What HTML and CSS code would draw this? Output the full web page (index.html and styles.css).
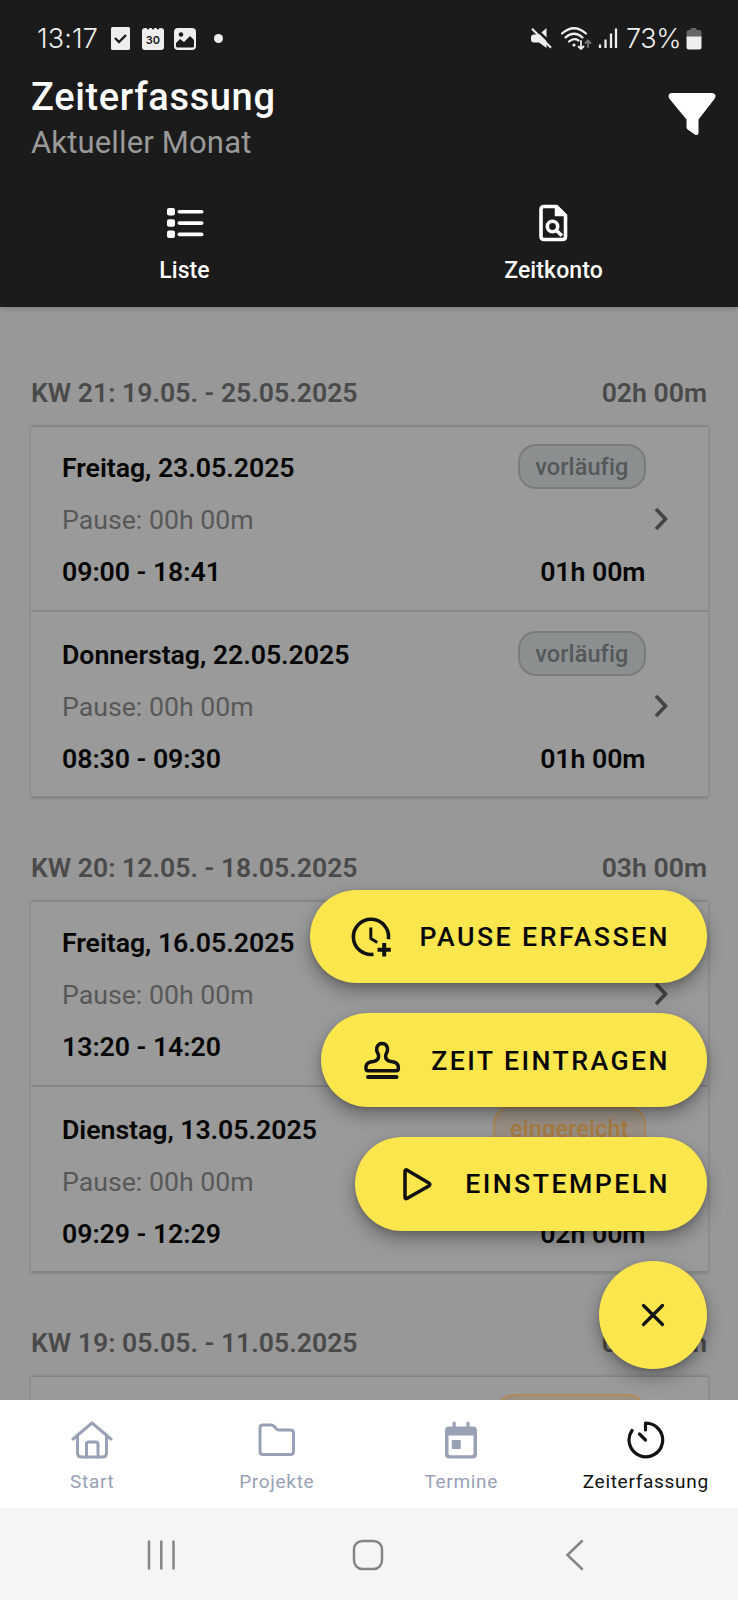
FILE: index.html
```html
<!DOCTYPE html>
<html lang="de">
<head>
    <meta charset="UTF-8">
    <meta name="viewport" content="width=device-width, initial-scale=1.0">
    <title>Zeiterfassung</title>
    <link rel="stylesheet" href="styles.css">
</head>
<body>
    <svg width="0" height="0" class="sprite">
        <symbol id="chevron" viewBox="0 0 14 24">
            <path d="M2 2l9.5 10L2 22" fill="none" stroke="currentColor" stroke-width="3.6"/>
        </symbol>
    </svg>

    <div class="screen">
        <header class="app-bar">
            <div class="status-bar">
                <span class="clock">13:17</span>
                <svg class="status-check" width="19" height="23" viewBox="0 0 19 23">
                    <rect width="19" height="23" rx="1.5" fill="#eee"/>
                    <path d="M4 11l4 4 7-7" fill="none" stroke="#1b1b1b" stroke-width="2.4"/>
                </svg>
                <svg class="status-calendar" width="22" height="22" viewBox="0 0 22 22">
                    <path d="M3 0h1.5q1.5 3 3 0h2q1.5 3 3 0h2q1.5 3 3 0H19q3 0 3 3v16q0 3-3 3H3q-3 0-3-3V3q0-3 3-3z" fill="#eee"/>
                    <text x="11" y="16" text-anchor="middle" class="calendar-day">30</text>
                </svg>
                <svg class="status-image" width="22" height="22" viewBox="0 0 22 22">
                    <rect width="22" height="22" rx="4" fill="#eee"/>
                    <circle cx="7" cy="6.5" r="2.3" fill="#1b1b1b"/>
                    <path d="M2 18v-3l4-4 4 3 6-6 4 4v6q0 1.5-1.5 1.5h-15Q2 19.5 2 18z" fill="#1b1b1b"/>
                </svg>
                <span class="status-dot"></span>
                <div class="status-right">
                    <svg width="21" height="21" viewBox="0 0 21 21">
                        <path d="M15.5 0v20L8 14.5H3q-3 0-3-3v-2q0-3 3-3h5z" fill="#eee"/>
                        <path d="M2.5-1.5L21.5 17" stroke="#1b1b1b" stroke-width="2.5"/>
                        <path d="M1 .8l19 19" stroke="#eee" stroke-width="2.2"/>
                    </svg>
                    <svg class="wifi" width="31" height="23" viewBox="0 0 31 23" fill="none" stroke="#eee" stroke-width="2.2" stroke-linecap="round">
                        <path d="M1 6.5Q13-4 25 6.5M4.5 10.5q8.5-7.5 17 0M8 14.5q5-4 9.5-1"/>
                        <circle cx="13" cy="18" r="1.6" fill="#eee" stroke="none"/>
                        <path d="M20 14v8M17.5 19.5L20 22l2.500-2.500" stroke-width="1.8"/>
                        <path d="M27 20v-6M24.500 16l2.500-2.500 2.500 2.500" stroke="#777" stroke-width="1.8"/>
                    </svg>
                    <svg class="signal" width="20" height="21" viewBox="0 0 20 21" stroke="#eee" stroke-width="2.3">
                        <path d="M2 16.500V20M7.500 11.500V20M13 5.500V20M18 .5V20"/>
                    </svg>
                    <span class="percent">73%</span>
                    <svg class="battery" width="16" height="22" viewBox="0 0 16 22">
                        <path d="M4.500 2V1q0-1 1-1h4q1 0 1 1v1H13q2.500 0 2.500 2.500V9H.5V4.500Q.5 2 3 2z" fill="#666"/>
                        <path d="M.5 8.500h15V19q0 2.500-2.500 2.500H3Q.5 21.500.5 19z" fill="#eee"/>
                    </svg>
                </div>
            </div>

            <div class="title-row">
                <div>
                    <h1>Zeiterfassung</h1>
                    <div class="subtitle">Aktueller Monat</div>
                </div>
                <svg class="filter" width="48" height="43" viewBox="0 0 48 43">
                    <path d="M4 0h40q2.300 0 3.200 1.700t-.6 4L30.500 26.500v13.200q0 3.300-3.300 2.100l-7.500-5.200q-1.200-1-1.200-2.600v-7.500L1.400 5.700Q0 3.500.8 1.700T4 0z" fill="#fff"/>
                </svg>
            </div>

            <div class="tabs">
                <div class="tab">
                    <svg width="38" height="38" viewBox="0 0 38 38" fill="#fff">
                        <rect x="1" y="4" width="8" height="7.5" rx="2"/>
                        <rect x="1" y="15.3" width="8" height="7.5" rx="2"/>
                        <rect x="1" y="26.6" width="8" height="7.5" rx="2"/>
                        <rect x="11.5" y="6" width="26" height="3.6" rx="1.8"/>
                        <rect x="11.5" y="17.3" width="26" height="3.6" rx="1.8"/>
                        <rect x="11.5" y="28.6" width="26" height="3.6" rx="1.8"/>
                    </svg>
                    <span>Liste</span>
                </div>
                <div class="tab">
                    <svg width="38" height="38" viewBox="0 0 38 38" fill="none" stroke="#fff" stroke-width="3.6">
                        <path d="M9 2.500h12.500l9 9v21q0 3-3 3H9q-3 0-3-3v-27q0-3 3-3z"/>
                        <path d="M20.500 2.500v9h10l-8.500-9z" fill="#fff" stroke-width="1.5"/>
                        <circle cx="17.5" cy="22.5" r="5.2"/>
                        <path d="M21.300 26.300l5.500 5.500"/>
                    </svg>
                    <span>Zeitkonto</span>
                </div>
            </div>
        </header>

        <main class="content">
            <section class="week">
                <div class="week-header"><span>KW 21: 19.05. - 25.05.2025</span><span>02h 00m</span></div>
                <div class="card">
                    <div class="entry">
                        <div class="entry-body">
                            <div class="line day"><span>Freitag, 23.05.2025</span><span class="badge">vorläufig</span></div>
                            <div class="line pause">Pause: 00h 00m</div>
                            <div class="line time"><span>09:00 - 18:41</span><span>01h 00m</span></div>
                        </div>
                        <svg class="chevron"><use href="#chevron"/></svg>
                    </div>
                    <div class="entry">
                        <div class="entry-body">
                            <div class="line day"><span>Donnerstag, 22.05.2025</span><span class="badge">vorläufig</span></div>
                            <div class="line pause">Pause: 00h 00m</div>
                            <div class="line time"><span>08:30 - 09:30</span><span>01h 00m</span></div>
                        </div>
                        <svg class="chevron"><use href="#chevron"/></svg>
                    </div>
                </div>
            </section>

            <section class="week">
                <div class="week-header"><span>KW 20: 12.05. - 18.05.2025</span><span>03h 00m</span></div>
                <div class="card">
                    <div class="entry">
                        <div class="entry-body">
                            <div class="line day"><span>Freitag, 16.05.2025</span></div>
                            <div class="line pause">Pause: 00h 00m</div>
                            <div class="line time"><span>13:20 - 14:20</span></div>
                        </div>
                        <svg class="chevron"><use href="#chevron"/></svg>
                    </div>
                    <div class="entry">
                        <div class="entry-body">
                            <div class="line day"><span>Dienstag, 13.05.2025</span><span class="badge submitted">eingereicht</span></div>
                            <div class="line pause">Pause: 00h 00m</div>
                            <div class="line time"><span>09:29 - 12:29</span><span>02h 00m</span></div>
                        </div>
                        <svg class="chevron"><use href="#chevron"/></svg>
                    </div>
                </div>
            </section>

            <section class="week">
                <div class="week-header"><span>KW 19: 05.05. - 11.05.2025</span><span>00h 00m</span></div>
                <div class="card">
                    <div class="entry">
                        <div class="entry-body">
                            <div class="line day"><span></span><span class="badge submitted empty"></span></div>
                        </div>
                    </div>
                </div>
            </section>

            <div class="fab-menu">
                <button class="fab">
                    <svg width="46" height="46" viewBox="0 0 46 46" fill="none" stroke="#111" stroke-width="3.6">
                        <path d="M40.400 25.300A17.600 17.600 0 1 0 25.500 40.300"/>
                        <path d="M22.800 13.500v11l6.500 4" stroke-width="3"/>
                        <path d="M36.200 29v13.500M29.500 35.700h13.300" stroke-width="4"/>
                    </svg>
                    <span>PAUSE ERFASSEN</span>
                </button>
                <button class="fab">
                    <svg width="46" height="46" viewBox="0 0 46 46" fill="none" stroke="#111" stroke-width="3.5" stroke-linecap="round" stroke-linejoin="round">
                        <path d="M9 32.700h28.300q2 0 2-2v-1.500q0-4.200-4.500-5.200l-4-.8q-4.200-1-4.200-5.200 0-1.500 1-3.200 1.400-2.400.8-5Q27.300 5.500 23.100 5.500t-5.300 4.300q-.6 2.600.8 5 1 1.700 1 3.200 0 4.200-4.200 5.200l-4 .8Q7 25 7 29.200v1.500q0 2 2 2z"/>
                        <path d="M9 39h28.500" stroke-width="4"/>
                    </svg>
                    <span>ZEIT EINTRAGEN</span>
                </button>
                <button class="fab">
                    <svg width="46" height="46" viewBox="0 0 46 46" fill="none" stroke="#111" stroke-width="3.5" stroke-linejoin="round">
                        <path d="M12 10.500v25.500q0 2.500 2.300 1.300l21.500-12.200q2.200-1.600 0-3.200L14.300 9.200Q12 8 12 10.500z"/>
                    </svg>
                    <span>EINSTEMPELN</span>
                </button>
                <button class="fab-close">
                    <svg width="24" height="24" viewBox="0 0 24 24" fill="none" stroke="#111" stroke-width="3.2" stroke-linecap="round">
                        <path d="M2.500 2.500l19 19M21.500 2.500l-19 19"/>
                    </svg>
                </button>
            </div>
        </main>

        <nav class="bottom-nav">
            <div class="nav-item">
                <svg width="42" height="40" viewBox="0 0 42 40" fill="none" stroke="currentColor" stroke-width="3" stroke-linecap="round" stroke-linejoin="round">
                    <path d="M2 19L21 3l19 16M6.500 16v17q0 4 4 4h21q4 0 4-4V16"/>
                    <path d="M15.500 37V24q0-2 2-2h7.500q2 0 2 2v13"/>
                </svg>
                <span>Start</span>
            </div>
            <div class="nav-item">
                <svg width="42" height="40" viewBox="0 0 42 40" fill="none" stroke="currentColor" stroke-width="3" stroke-linejoin="round">
                    <path d="M6.500 5H15q2 0 3.300 1.500l1.700 2Q21 10 22.500 10H34.500q3 0 3 3v18.500q0 3-3 3H7q-3 0-3-3V8q0-3 2.500-3z"/>
                </svg>
                <span>Projekte</span>
            </div>
            <div class="nav-item">
                <svg width="42" height="40" viewBox="0 0 42 40" fill="currentColor">
                    <path fill-rule="evenodd" d="M9 6.500h24q4 0 4 4v24q0 4-4 4H9q-4 0-4-4v-24q0-4 4-4zM8.500 15.500v18q0 1.800 1.800 1.800h21.400q1.800 0 1.800-1.800v-18z"/>
                    <rect x="12.5" y="1.5" width="3.2" height="7" rx="1.6"/>
                    <rect x="26.3" y="1.5" width="3.2" height="7" rx="1.6"/>
                    <rect x="11.8" y="20" width="9" height="9" rx="1"/>
                </svg>
                <span>Termine</span>
            </div>
            <div class="nav-item active">
                <svg width="42" height="40" viewBox="0 0 42 40" fill="none" stroke="currentColor" stroke-width="3.2" stroke-linecap="round" stroke-linejoin="round">
                    <path d="M20.500 10V3.200A16.800 16.800 0 1 1 7 10.500"/>
                    <path d="M14.500 14l6 6"/>
                </svg>
                <span>Zeiterfassung</span>
            </div>
        </nav>

        <div class="system-nav">
            <svg width="32" height="32" viewBox="0 0 32 32"><path d="M4 2.500v27M16.300 2.500v27M28.500 2.500v27"/></svg>
            <svg width="32" height="32" viewBox="0 0 32 32"><rect x="2" y="2" width="28" height="28" rx="8.5"/></svg>
            <svg width="32" height="32" viewBox="0 0 32 32"><path d="M23 2L8.500 16 23 30"/></svg>
        </div>
    </div>
</body>
</html>
```

FILE: styles.css
```css
* {
    box-sizing: border-box;
}

body {
    margin: 0;
    font-family: Roboto, sans-serif;
    background-color: #999;
}

svg {
    display: block;
    flex-shrink: 0;
}

.sprite {
    position: absolute;
}

.screen {
    width: 738px;
    height: 1600px;
    display: flex;
    flex-direction: column;
    overflow: hidden;
}

/* Header */
.app-bar {
    height: 307px;
    flex-shrink: 0;
    background-color: #1b1b1b;
    color: #fff;
    box-shadow: 0 1px 6px rgba(0, 0, 0, 0.2);
    z-index: 1;
}

.status-bar {
    height: 77px;
    padding: 0 36px 0 37px;
    display: flex;
    align-items: center;
    font-family: Inter, sans-serif;
    font-size: 27px;
    font-weight: 350;
    color: #eee;
}

.clock {
    width: 74px;
    letter-spacing: 0.1px;
}

.status-calendar {
    margin-left: 12px;
}

.calendar-day {
    font-size: 11px;
    font-weight: 600;
    fill: #1b1b1b;
}

.status-image {
    margin-left: 10px;
}

.status-dot {
    width: 9px;
    height: 9px;
    margin-left: 18px;
    border-radius: 50%;
    background-color: #eee;
}

.status-right {
    margin-left: auto;
    display: flex;
    align-items: center;
}

.wifi {
    margin-left: 9px;
}

.signal {
    margin-left: 6px;
}

.percent {
    width: 57px;
    margin-left: 8px;
    letter-spacing: -0.4px;
}

.battery {
    margin-left: 3px;
}

.title-row {
    height: 92px;
    padding: 0 22px 0 31px;
    display: flex;
    justify-content: space-between;
}

h1 {
    margin: 0;
    font-size: 38px;
    line-height: 40px;
    font-weight: 500;
    letter-spacing: 0.65px;
}

.subtitle {
    margin-top: 8px;
    font-size: 31px;
    line-height: 36px;
    letter-spacing: 0.15px;
    color: #999;
}

.filter {
    margin-top: 16px;
}

.tabs {
    display: flex;
    padding-top: 35px;
}

.tab {
    flex: 1;
    display: flex;
    flex-direction: column;
    align-items: center;
    font-size: 23px;
    line-height: 28px;
    font-weight: 500;
    letter-spacing: 0.1px;
}

.tab span {
    margin-top: 15px;
}

/* Week list */
.content {
    position: relative;
    height: 1093px;
    flex-shrink: 0;
    padding: 16px 31px 0;
    overflow: hidden;
    background-color: #989898;
}

.week {
    height: 475px;
}

.week-header {
    padding: 54px 0 17px;
    display: flex;
    justify-content: space-between;
    font-size: 26.6px;
    line-height: 32px;
    font-weight: 600;
    color: #4a4a4a;
}

.card {
    margin-right: -1px;
    border-top: 1px solid #858585;
    background-color: #9a9a9a;
    box-shadow: 0 0 3px rgba(0, 0, 0, 0.22);
}

.entry {
    height: 185px;
    padding: 15px 38px 0 31px;
    display: flex;
    align-items: flex-start;
    border-bottom: 2px solid #868686;
}

.entry + .entry {
    height: 186px;
    padding-top: 17px;
}

.entry-body {
    width: 583.5px;
    margin-right: 8px;
    flex-shrink: 0;
}

.line {
    height: 52px;
    display: flex;
    align-items: center;
    justify-content: space-between;
    font-size: 26.7px;
    font-weight: 600;
    letter-spacing: -0.05px;
    color: #050505;
}

.line.pause {
    font-weight: 400;
    letter-spacing: 0;
    color: #585858;
}

.badge {
    height: 45px;
    margin-top: -4px;
    padding: 0 15px;
    border: 2px solid #7a7d7e;
    border-radius: 18px;
    background-color: #8b8f8f;
    color: #54585b;
    font-size: 23.5px;
    font-weight: 500;
    line-height: 42px;
    letter-spacing: 0.1px;
}

.badge.submitted {
    border-color: #af8a58;
    background-color: #9b9084;
    color: #a87c42;
}

.badge.empty {
    width: 150px;
}

.chevron {
    width: 14px;
    height: 24px;
    margin-top: 65px;
    color: #444;
}

/* Floating actions */
.fab-menu {
    position: absolute;
    right: 31px;
    bottom: 31px;
    display: flex;
    flex-direction: column;
    align-items: flex-end;
    gap: 30.5px;
}

.fab,
.fab-close {
    border: none;
    background-color: #fbe64d;
    box-shadow: 0 8px 18px rgba(0, 0, 0, 0.32), 0 2px 5px rgba(0, 0, 0, 0.15);
}

.fab {
    height: 93.3px;
    padding: 1px 37px 0 38px;
    display: flex;
    align-items: center;
    gap: 26px;
    border-radius: 47px;
    font-family: Roboto, sans-serif;
    font-size: 26.7px;
    font-weight: 500;
    letter-spacing: 2.45px;
    color: #050505;
}

.fab-close {
    width: 108px;
    height: 108px;
    padding: 0;
    display: flex;
    align-items: center;
    justify-content: center;
    border-radius: 50%;
}

/* Bottom navigation */
.bottom-nav {
    height: 108px;
    flex-shrink: 0;
    display: flex;
    background-color: #fff;
    z-index: 1;
}

.nav-item {
    flex: 1;
    padding-top: 20px;
    display: flex;
    flex-direction: column;
    align-items: center;
    font-size: 19px;
    line-height: 24px;
    letter-spacing: 0.7px;
    color: #98a1b5;
}

.nav-item span {
    margin-top: 10px;
}

.nav-item.active {
    color: #111;
}

.system-nav {
    height: 92px;
    padding: 1px 2px 0 0;
    display: flex;
    align-items: center;
    justify-content: center;
    gap: 175px;
    background-color: #f5f5f8;
}

.system-nav svg {
    fill: none;
    stroke: #858585;
    stroke-width: 2.5;
    stroke-linecap: round;
}
```
